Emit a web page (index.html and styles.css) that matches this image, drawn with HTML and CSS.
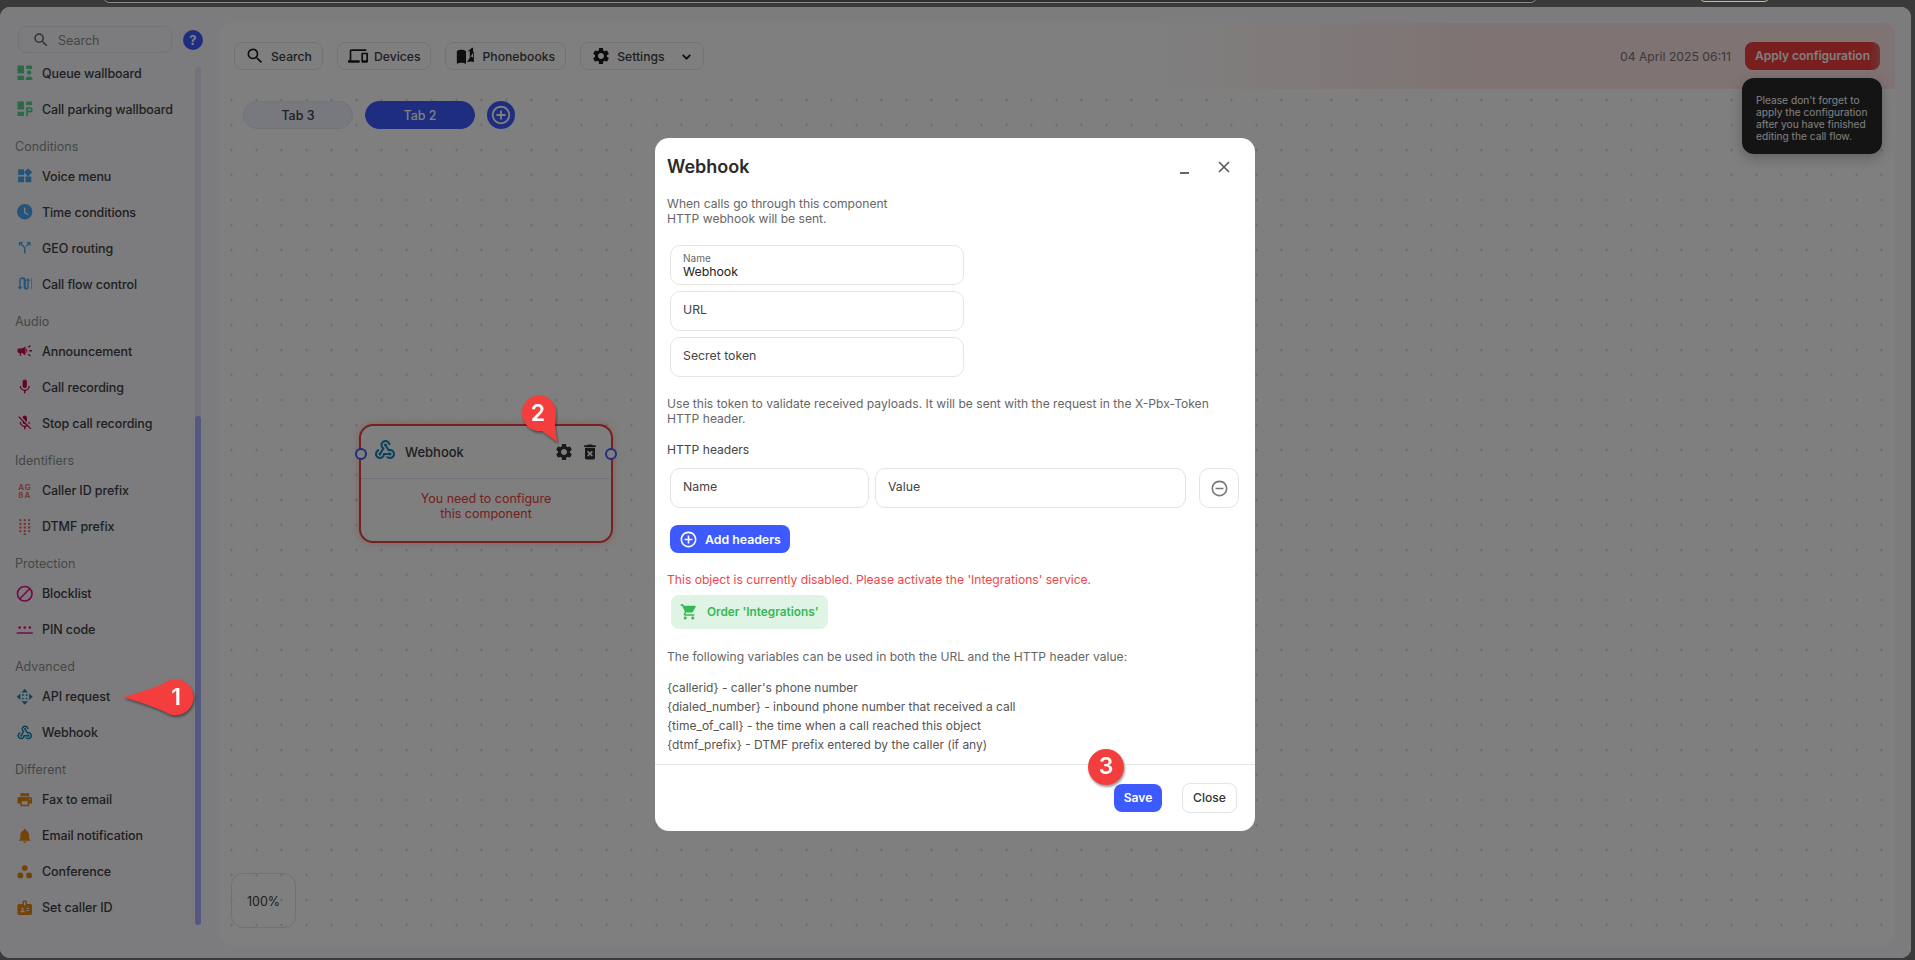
FILE: index.html
```html
<!DOCTYPE html>
<html lang="en">
<head>
  <meta charset="UTF-8">
  <title>Call flow editor</title>
  <link rel="stylesheet" href="styles.css">
</head>
<body>

  <svg class="sprite" width="0" height="0">
    <symbol id="i-search" viewBox="0 0 24 24"><path d="M15.5 14h-.79l-.28-.27A6.471 6.471 0 0 0 16 9.5 6.5 6.5 0 1 0 9.5 16c1.61 0 3.09-.59 4.23-1.57l.27.28v.79l5 4.99L20.49 19l-4.99-5zm-6 0C7.01 14 5 11.99 5 9.5S7.01 5 9.5 5 14 7.01 14 9.5 11.99 14 9.5 14z"/></symbol>
    <symbol id="i-queue" viewBox="0 0 24 24"><path d="M2 2h9v11H2zM2 16h9v6H2zM14 2h8v5h-8z"/><circle cx="18" cy="11.500" r="3"/><path d="M13 22c0-3.500 2-5 5-5s5 1.500 5 5z"/></symbol>
    <symbol id="i-parking" viewBox="0 0 24 24"><path d="M2 2h9v11H2zM2 16h9v6H2zM14 2h8v5h-8zM14 10h5.500a3.500 3.500 0 0 1 0 7H16.500v5H14zm2.500 2.500v2h3a1 1 0 0 0 0-2z"/></symbol>
    <symbol id="i-widgets" viewBox="0 0 24 24"><path d="M13 13v8h8v-8h-8zM3 21h8v-8H3v8zM3 3v8h8V3H3zm13.660-1.310L11 7.340 16.660 13l5.660-5.660-5.660-5.650z"/></symbol>
    <symbol id="i-clock" viewBox="0 0 24 24"><path d="M12 1.500a10.500 10.500 0 1 0 0 21 10.500 10.500 0 0 0 0-21zm4 15.200-5-3V6h1.800v6.800l4.100 2.400z"/></symbol>
    <symbol id="i-split" viewBox="0 0 24 24"><path d="M14 4l2.290 2.290-2.880 2.880 1.420 1.420 2.880-2.880L20 10V4zm-4 0H4v6l2.290-2.290 4.710 4.700V20h2v-8.410l-5.290-5.300z"/></symbol>
    <symbol id="i-flow" viewBox="0 0 24 24"><path d="M2 16l3.500 4L9 16H6.500V7.500a2 2 0 0 1 4 0v9a3.500 3.500 0 0 0 7 0V8H20l-3.500-4L13 8h2.500v8.500a1 1 0 0 1-2 0v-9a4.500 4.500 0 0 0-9 0V16z"/><path d="M20.500 4h1.500v16h-1.500z" opacity=".6"/></symbol>
    <symbol id="i-campaign" viewBox="0 0 24 24"><path d="M18 11v2h4v-2h-4zm-2 6.610c.960.710 2.210 1.650 3.200 2.390.400-.530.800-1.070 1.200-1.600-.990-.740-2.240-1.680-3.200-2.400-.400.540-.800 1.080-1.200 1.610zM20.400 5.600c-.400-.530-.800-1.070-1.200-1.600-.990.740-2.240 1.680-3.200 2.400.400.530.800 1.070 1.200 1.600.960-.720 2.210-1.650 3.200-2.400zM4 9c-1.100 0-2 .900-2 2v2c0 1.100.900 2 2 2h1v4h2v-4h1l5 3V6L8 9H4zm11.500 3c0-1.330-.580-2.530-1.500-3.350v6.690c.920-.810 1.500-2.010 1.500-3.340z"/></symbol>
    <symbol id="i-mic" viewBox="0 0 24 24"><path d="M12 14c1.660 0 2.990-1.340 2.990-3L15 5c0-1.660-1.340-3-3-3S9 3.340 9 5v6c0 1.660 1.340 3 3 3zm5.300-3c0 3-2.540 5.100-5.300 5.100S6.700 14 6.700 11H5c0 3.410 2.720 6.230 6 6.720V21h2v-3.280c3.280-.480 6-3.300 6-6.720h-1.700z"/></symbol>
    <symbol id="i-micoff" viewBox="0 0 24 24"><path d="M19 11h-1.700c0 .740-.160 1.430-.430 2.050l1.230 1.230c.560-.980.900-2.090.900-3.280zm-4.020.170c0-.060.020-.110.020-.170V5c0-1.660-1.340-3-3-3S9 3.340 9 5v.180l5.980 5.990zM4.270 3L3 4.270l6.010 6.010V11c0 1.660 1.330 3 2.990 3 .220 0 .440-.030.650-.080l1.660 1.660c-.710.330-1.500.520-2.310.520-2.760 0-5.300-2.100-5.300-5.100H5c0 3.410 2.720 6.230 6 6.720V21h2v-3.280c.910-.130 1.770-.450 2.540-.900L19.730 21 21 19.730 4.270 3z"/></symbol>
    <symbol id="i-dialpad" viewBox="0 0 24 24"><circle cx="6" cy="3" r="1.600"/><circle cx="12" cy="3" r="1.600"/><circle cx="18" cy="3" r="1.600"/><circle cx="6" cy="8" r="1.600"/><circle cx="12" cy="8" r="1.600"/><circle cx="18" cy="8" r="1.600"/><circle cx="6" cy="13" r="1.600"/><circle cx="12" cy="13" r="1.600"/><circle cx="18" cy="13" r="1.600"/><circle cx="12" cy="18" r="1.600"/><circle cx="6" cy="18" r="1.600"/><circle cx="18" cy="18" r="1.600"/><circle cx="12" cy="22.500" r="1.600"/></symbol>
    <symbol id="i-block" viewBox="0 0 24 24"><circle cx="12" cy="12" r="10" fill="none" stroke="currentColor" stroke-width="2.200"/><path d="M5.500 18.500l13-13" stroke="currentColor" stroke-width="2.200"/></symbol>
    <symbol id="i-pin" viewBox="0 0 24 24"><circle cx="5" cy="9" r="1.800"/><circle cx="12" cy="9" r="1.800"/><circle cx="19" cy="9" r="1.800"/><path d="M1 15.500h22v2H1z"/></symbol>
    <symbol id="i-api" viewBox="0 0 24 24"><path d="M12 1l4.500 5h-9zM12 23l-4.500-5h9zM1 12l5-4.500v9zM23 12l-5 4.500v-9z"/><circle cx="9.500" cy="9.500" r="1.300"/><circle cx="14.500" cy="9.500" r="1.300"/><circle cx="9.500" cy="14.500" r="1.300"/><circle cx="14.500" cy="14.500" r="1.300"/></symbol>
    <symbol id="i-webhook" viewBox="0 0 24 24"><path d="M10 15h5.880c.270-.310.670-.500 1.120-.500.830 0 1.500.670 1.500 1.500s-.670 1.500-1.500 1.500c-.440 0-.840-.190-1.120-.500H11.900c-.460 2.280-2.480 4-4.900 4-2.760 0-5-2.240-5-5 0-2.420 1.720-4.440 4-4.900v2.070c-1.160.410-2 1.530-2 2.830 0 1.650 1.350 3 3 3s3-1.350 3-3v-1zm2.500-11c1.650 0 3 1.350 3 3h2c0-2.760-2.240-5-5-5s-5 2.240-5 5c0 1.430.600 2.710 1.550 3.620l-2.350 3.900c-.680.140-1.200.750-1.200 1.480 0 .830.670 1.500 1.500 1.500s1.500-.670 1.500-1.500c0-.160-.020-.310-.070-.450l3.380-5.630C10.490 9.610 9.500 8.420 9.500 7c0-1.650 1.350-3 3-3zm4.500 9c-.640 0-1.230.200-1.720.540l-3.050-5.070C11.530 8.350 11 7.740 11 7c0-.830.670-1.500 1.500-1.500S14 6.170 14 7c0 .150-.020.290-.060.430l2.190 3.650c.280-.050.570-.080.870-.080 2.760 0 5 2.240 5 5s-2.240 5-5 5c-1.850 0-3.470-1.010-4.330-2.500h2.670c.480.320 1.050.500 1.660.500 1.650 0 3-1.350 3-3s-1.350-3-3-3z"/></symbol>
    <symbol id="i-print" viewBox="0 0 24 24"><path d="M19 8H5c-1.660 0-3 1.340-3 3v6h4v4h12v-4h4v-6c0-1.660-1.340-3-3-3zm-3 11H8v-5h8v5zm3-7c-.550 0-1-.450-1-1s.450-1 1-1 1 .450 1 1-.450 1-1 1zm-1-9H6v4h12V3z"/></symbol>
    <symbol id="i-bell" viewBox="0 0 24 24"><path d="M12 22c1.100 0 2-.900 2-2h-4c0 1.100.890 2 2 2zm6-6v-5c0-3.070-1.640-5.640-4.500-6.320V4c0-.830-.670-1.500-1.500-1.500s-1.500.670-1.500 1.500v.680C7.630 5.360 6 7.920 6 11v5l-2 2v1h16v-1l-2-2z"/></symbol>
    <symbol id="i-conf" viewBox="0 0 24 24"><circle cx="12" cy="7" r="4"/><circle cx="6" cy="17" r="4"/><circle cx="18" cy="17" r="4"/></symbol>
    <symbol id="i-badge" viewBox="0 0 24 24"><path d="M20 7h-5V4c0-1.100-.900-2-2-2h-2c-1.100 0-2 .900-2 2v3H4c-1.100 0-2 .900-2 2v11c0 1.100.900 2 2 2h16c1.100 0 2-.900 2-2V9c0-1.100-.900-2-2-2zM9 12c.830 0 1.500.670 1.500 1.500S9.830 15 9 15s-1.500-.670-1.500-1.500S8.170 12 9 12zm3 6H6v-.750c0-1 2-1.500 3-1.500s3 .500 3 1.500V18zm1-9h-2V4h2v5zm5 7.500h-4V15h4v1.500zm0-3h-4V12h4v1.500z"/></symbol>
    <symbol id="i-devices" viewBox="0 0 24 24"><path d="M4 6h18V4H4c-1.100 0-2 .900-2 2v11H0v3h14v-3H4V6zm19 2h-6c-.550 0-1 .450-1 1v10c0 .550.450 1 1 1h6c.550 0 1-.450 1-1V9c0-.550-.450-1-1-1zm-1 9h-4v-7h4v7z"/></symbol>
    <symbol id="i-book" viewBox="0 0 24 24"><path d="M1 6c1.450-1.100 3.550-1.500 5.500-1.500S10.550 4.900 12 6v15.500c-1.450-1.100-3.550-1.500-5.500-1.500-1.450 0-3.400.450-4.750 1.100-.100 0-.150.050-.250.050-.250 0-.500-.250-.500-.500zM13 7c1-.700 2.200-1.200 3.500-1.400V14l2-1.500 2 1.500V2h-1.500v.500M21.500 6.500v12.700c-1.100-.350-2.800-.700-4-.700-1.400 0-3.200.400-4.500 1z"/></symbol>
    <symbol id="i-gear" viewBox="0 0 24 24"><path d="M19.140 12.940c.040-.300.060-.610.060-.940 0-.320-.020-.640-.070-.940l2.030-1.580c.180-.140.230-.410.120-.610l-1.920-3.320c-.120-.220-.370-.290-.590-.220l-2.390.960c-.500-.380-1.030-.700-1.620-.940l-.360-2.540c-.040-.240-.240-.410-.480-.410h-3.840c-.240 0-.430.170-.470.410l-.360 2.540c-.590.240-1.130.570-1.620.940l-2.390-.960c-.220-.080-.470 0-.590.220L2.740 8.870c-.120.210-.080.470.120.610l2.030 1.580c-.050.300-.090.630-.090.940s.020.640.070.940l-2.030 1.580c-.180.140-.230.410-.120.610l1.920 3.320c.120.220.370.290.590.220l2.390-.960c.500.380 1.030.700 1.620.940l.360 2.540c.050.240.240.410.480.410h3.840c.240 0 .440-.170.470-.410l.360-2.540c.590-.240 1.130-.560 1.620-.940l2.390.960c.220.080.470 0 .590-.220l1.920-3.320c.120-.220.070-.470-.120-.610l-2.010-1.580zM12 15.600c-1.980 0-3.600-1.620-3.600-3.600s1.620-3.600 3.600-3.600 3.600 1.620 3.600 3.600-1.620 3.600-3.600 3.600z"/></symbol>
    <symbol id="i-trash" viewBox="0 0 24 24"><path d="M6 19c0 1.100.900 2 2 2h8c1.100 0 2-.900 2-2V7H6v12zm2.460-7.120l1.410-1.410L12 12.590l2.120-2.120 1.410 1.410L13.410 14l2.120 2.120-1.410 1.410L12 15.410l-2.120 2.120-1.410-1.410L10.590 14l-2.130-2.120zM15.500 4l-1-1h-5l-1 1H5v2h14V4z"/></symbol>
    <symbol id="i-plus" viewBox="0 0 24 24"><path d="M13 7h-2v4H7v2h4v4h2v-4h4v-2h-4V7zm-1-5C6.480 2 2 6.480 2 12s4.480 10 10 10 10-4.480 10-10S17.520 2 12 2zm0 18c-4.410 0-8-3.590-8-8s3.590-8 8-8 8 3.590 8 8-3.590 8-8 8z"/></symbol>
    <symbol id="i-minus" viewBox="0 0 24 24"><path d="M7 11v2h10v-2H7zm5-9C6.480 2 2 6.480 2 12s4.480 10 10 10 10-4.480 10-10S17.520 2 12 2zm0 18c-4.410 0-8-3.590-8-8s3.590-8 8-8 8 3.590 8 8-3.590 8-8 8z"/></symbol>
    <symbol id="i-cart" viewBox="0 0 24 24"><path d="M7 18c-1.100 0-1.990.900-1.990 2S5.900 22 7 22s2-.900 2-2-.900-2-2-2zM1 2v2h2l3.600 7.590-1.350 2.450c-.160.280-.250.610-.250.960 0 1.100.900 2 2 2h12v-2H7.420c-.140 0-.250-.110-.250-.250l.030-.120.900-1.830h7.450c.750 0 1.410-.410 1.750-1.030l3.580-6.490c.080-.140.120-.310.120-.480 0-.550-.450-1-1-1H5.210l-.940-2H1zm16 16c-1.100 0-1.990.900-1.990 2s.890 2 1.990 2 2-.900 2-2-.900-2-2-2z"/></symbol>
  </svg>

  <div class="browser-bar">
    <div class="browser-url"></div>
    <div class="browser-btn"></div>
  </div>

  <div class="window">

    <aside class="sidebar">
      <div class="side-search">
        <div class="search-box">
          <svg class="search-icon"><use href="#i-search"/></svg>
          <span>Search</span>
        </div>
        <div class="help">?</div>
      </div>
      <div class="side-body">
        <div class="side-list">
          <div class="item"><svg class="c-green"><use href="#i-queue"/></svg>Queue wallboard</div>
          <div class="item"><svg class="c-green"><use href="#i-parking"/></svg>Call parking wallboard</div>

          <div class="group">Conditions</div>
          <div class="item"><svg class="c-blue"><use href="#i-widgets"/></svg>Voice menu</div>
          <div class="item"><svg class="c-blue"><use href="#i-clock"/></svg>Time conditions</div>
          <div class="item"><svg class="c-blue"><use href="#i-split"/></svg>GEO routing</div>
          <div class="item"><svg class="c-blue"><use href="#i-flow"/></svg>Call flow control</div>

          <div class="group">Audio</div>
          <div class="item"><svg class="c-wine"><use href="#i-campaign"/></svg>Announcement</div>
          <div class="item"><svg class="c-wine"><use href="#i-mic"/></svg>Call recording</div>
          <div class="item"><svg class="c-wine"><use href="#i-micoff"/></svg>Stop call recording</div>

          <div class="group">Identifiers</div>
          <div class="item"><svg class="c-brick" viewBox="0 0 24 24"><text class="mini" x="3" y="11">AG</text><text class="mini" x="3" y="22">8A</text></svg>Caller ID prefix</div>
          <div class="item"><svg class="c-brick"><use href="#i-dialpad"/></svg>DTMF prefix</div>

          <div class="group">Protection</div>
          <div class="item"><svg class="c-pink"><use href="#i-block"/></svg>Blocklist</div>
          <div class="item"><svg class="c-pink"><use href="#i-pin"/></svg>PIN code</div>

          <div class="group">Advanced</div>
          <div class="item"><svg class="c-teal"><use href="#i-api"/></svg>API request</div>
          <div class="item"><svg class="c-teal"><use href="#i-webhook"/></svg>Webhook</div>

          <div class="group">Different</div>
          <div class="item"><svg class="c-amber"><use href="#i-print"/></svg>Fax to email</div>
          <div class="item"><svg class="c-amber"><use href="#i-bell"/></svg>Email notification</div>
          <div class="item"><svg class="c-amber"><use href="#i-conf"/></svg>Conference</div>
          <div class="item"><svg class="c-amber"><use href="#i-badge"/></svg>Set caller ID</div>
        </div>
        <div class="scrollbar"><div class="thumb"></div></div>
      </div>
    </aside>

    <main class="panel">
      <header class="topbar">
        <div class="tool"><svg><use href="#i-search"/></svg>Search</div>
        <div class="tool"><svg><use href="#i-devices"/></svg>Devices</div>
        <div class="tool"><svg><use href="#i-book"/></svg>Phonebooks</div>
        <div class="tool"><svg><use href="#i-gear"/></svg>Settings
          <svg class="chevron" viewBox="0 0 12 12"><path d="M2.500 4.500L6 8l3.500-3.500"/></svg>
        </div>
        <div class="topbar-right">
          <span class="date">04 April 2025 06:11</span>
          <div class="apply">Apply configuration</div>
        </div>
      </header>

      <div class="canvas">
        <div class="tabs">
          <div class="tab">Tab 3</div>
          <div class="tab tab-active">Tab 2</div>
          <div class="tab-add"><svg><use href="#i-plus"/></svg></div>
        </div>

        <div class="node">
          <div class="node-head">
            <svg class="node-icon"><use href="#i-webhook"/></svg>
            <span class="node-title">Webhook</span>
            <svg class="node-btn"><use href="#i-gear"/></svg>
            <svg class="node-btn"><use href="#i-trash"/></svg>
          </div>
          <div class="node-msg">You need to configure<br>this component</div>
          <span class="port port-left"></span>
          <span class="port port-right"></span>
        </div>

        <div class="zoom-box">100%</div>
      </div>

      <div class="tooltip">Please don't forget to<br>apply the configuration<br>after you have finished<br>editing the call flow.</div>
    </main>

    <div class="overlay"></div>
  </div>

  <section class="modal">
    <div class="modal-head">
      <h2>Webhook</h2>
      <span class="minimize"></span>
      <svg class="close-x" viewBox="0 0 14 14"><path d="M2 2l10 10M12 2L2 12"/></svg>
    </div>

    <div class="modal-body">
      <p class="note">When calls go through this component<br>HTTP webhook will be sent.</p>

      <div class="fields">
        <div class="field filled"><label>Name</label><span>Webhook</span></div>
        <div class="field">URL</div>
        <div class="field">Secret token</div>
      </div>

      <p class="note hint">Use this token to validate received payloads. It will be sent with the request in the X-Pbx-Token HTTP header.</p>

      <div class="sub-label">HTTP headers</div>
      <div class="header-row">
        <div class="field field-name">Name</div>
        <div class="field field-value">Value</div>
        <div class="field field-remove"><svg><use href="#i-minus"/></svg></div>
      </div>

      <div class="btn-add"><svg><use href="#i-plus"/></svg>Add headers</div>

      <p class="error">This object is currently disabled. Please activate the 'Integrations' service.</p>
      <div class="btn-order"><svg><use href="#i-cart"/></svg>Order 'Integrations'</div>

      <p class="note vars-intro">The following variables can be used in both the URL and the HTTP header value:</p>
      <ul class="vars">
        <li>{callerid} - caller's phone number</li>
        <li>{dialed_number} - inbound phone number that received a call</li>
        <li>{time_of_call} - the time when a call reached this object</li>
        <li>{dtmf_prefix} - DTMF prefix entered by the caller (if any)</li>
      </ul>
    </div>

    <div class="modal-foot">
      <div class="btn-save">Save</div>
      <div class="btn-close">Close</div>
    </div>
  </section>

  <!-- red step markers -->
  <svg class="mark mark-1" viewBox="0 0 80 46">
    <path d="M3 22C20 17 38 12 46 7a18 18 0 1 1 3 32C38 33 20 27 3 22z"/>
    <text x="56" y="30">1</text>
  </svg>
  <svg class="mark mark-2" viewBox="0 0 46 56">
    <path d="M23 3a18 18 0 0 1 18 18c0 5-1 9-1 12l2 17-15-11a18 18 0 1 1-4-36z"/>
    <text x="23" y="28.500">2</text>
  </svg>
  <svg class="mark mark-3" viewBox="0 0 46 46">
    <circle cx="23" cy="23" r="18"/>
    <text x="23" y="30">3</text>
  </svg>

</body>
</html>
```

FILE: styles.css
```css
* {
  box-sizing: border-box;
}

body {
  margin: 0;
  height: 960px;
  overflow: hidden;
  position: relative;
  background-color: #3a3a3a;
  font-family: 'Inter', 'Liberation Sans', sans-serif;
  font-size: 12.500px;
  color: #3c3c3c;
}

.sprite {
  position: absolute;
}

svg {
  fill: currentColor;
  flex-shrink: 0;
}

/* strip of the browser above the app */
.browser-bar {
  height: 7px;
  position: relative;
}

.browser-url {
  position: absolute;
  left: 103px;
  top: -10px;
  width: 1434px;
  height: 13px;
  border: 1px solid #8c8c8c;
  border-radius: 8px;
  background-color: #2f2f2f;
}

.browser-btn {
  position: absolute;
  left: 1699px;
  top: -10px;
  width: 71px;
  height: 12px;
  border: 1px solid #a9c9a0;
  border-radius: 6px;
}

.window {
  position: relative;
  display: flex;
  height: 951px;
  margin-right: 4px;
  border-radius: 10px;
  background-color: #f8f9ff;
  overflow: hidden;
}

/* sidebar */
.sidebar {
  width: 220px;
  flex-shrink: 0;
}

.side-search {
  display: flex;
  align-items: center;
  padding: 19px 0 2px 18px;
}

.search-box {
  display: flex;
  align-items: center;
  gap: 8px;
  width: 154px;
  height: 27px;
  padding: 1px 0 0 13px;
  border: 1px solid #e6e6ec;
  border-radius: 8px;
  color: #8a8a8a;
  font-size: 12.500px;
}

.search-icon {
  width: 18px;
  height: 18px;
  margin-top: -1px;
  color: #666;
}

.help {
  width: 20px;
  height: 20px;
  margin-left: 11px;
  border-radius: 50%;
  background-color: #3d5afe;
  color: #fff;
  font-size: 13px;
  font-weight: 700;
  line-height: 20px;
  text-align: center;
}

.side-body {
  display: flex;
}

.side-list {
  width: 195px;
  padding-left: 15px;
}

.item {
  display: flex;
  align-items: center;
  height: 36px;
  gap: 8.250px;
  padding-left: 1.250px;
  font-size: 12.500px;
  font-weight: 500;
  letter-spacing: -0.1px;
  color: #404040;
}

.item svg {
  width: 17.500px;
  height: 17.500px;
}

.group {
  padding: 13px 0 4.100px;
  line-height: 14px;
  font-size: 12.500px;
  color: #8d8d8d;
}

.c-green { color: #55d58f; }
.c-blue { color: #4aa8f5; }
.c-wine { color: #c00c52; }
.c-brick { color: #e86a55; }
.c-pink { color: #e9128a; }
.c-teal { color: #0f87b8; }
.c-amber { color: #e8860f; }

.mini {
  font-size: 11px;
  font-weight: 600;
  letter-spacing: 1.500px;
}

.scrollbar {
  display: flex;
  flex-direction: column;
  justify-content: flex-end;
  width: 6px;
  height: 858px;
  margin-top: 12px;
  border-radius: 3px;
  background-color: #e6e8f6;
}

.thumb {
  height: 509px;
  border-radius: 3px;
  background-color: #a6b0ff;
}

/* main panel */
.panel {
  position: relative;
  display: flex;
  flex-direction: column;
  width: 1675px;
  height: 922px;
  margin-top: 16px;
  border-radius: 12px;
  background-color: #fff;
}

.topbar {
  display: flex;
  align-items: center;
  gap: 14px;
  height: 66px;
  flex-shrink: 0;
  padding: 0 15px 0 14px;
  border-radius: 12px 12px 0 0;
  background: linear-gradient(90deg, #fff 55%, #ffe6e6 76%);
  font-size: 12.200px;
}

.tool {
  display: flex;
  align-items: center;
  gap: 6px;
  height: 28px;
  padding: 0 10px;
  border: 1px solid #e6e6e6;
  border-radius: 8px;
  font-weight: 500;
  color: #404040;
}

.tool svg {
  width: 20px;
  height: 20px;
  color: #1c1c1c;
}

.tool .chevron {
  width: 13px;
  height: 13px;
  margin-left: 9px;
  fill: none;
  stroke: #1c1c1c;
  stroke-width: 1.600;
}

.topbar-right {
  display: flex;
  align-items: center;
  gap: 14px;
  margin-left: auto;
}

.date {
  color: #747474;
}

.apply {
  width: 135px;
  height: 28px;
  line-height: 28px;
  text-align: center;
  border-radius: 8px;
  background: linear-gradient(90deg, #f03e3e 92%, #e06a6a);
  color: #fff;
  font-size: 12px;
  font-weight: 600;
}

.tooltip {
  position: absolute;
  left: 1522px;
  top: 55px;
  width: 140px;
  height: 76px;
  padding: 16px 0 0 14px;
  border-radius: 12px;
  background-color: #282828;
  box-shadow: 0 4px 14px rgba(0, 0, 0, 0.25);
  color: #fff;
  font-size: 10.200px;
  line-height: 12px;
}

.canvas {
  position: relative;
  flex: 1;
  border-radius: 0 0 12px 12px;
  background-image: radial-gradient(circle, #d8d8d8 1px, transparent 1.300px);
  background-size: 25px 25px;
  background-position: -1px -1.500px;
}

.tabs {
  display: flex;
  align-items: center;
  gap: 12px;
  padding: 12px 0 0 23px;
}

.tab {
  width: 110px;
  height: 28px;
  line-height: 27px;
  text-align: center;
  border: 1px solid #e3e6f2;
  border-radius: 14px;
  background-color: #f1f3fc;
  font-weight: 500;
  color: #404040;
}

.tab-active {
  border-color: #3d5afe;
  background-color: #3d5afe;
  color: #fff;
}

.tab-add {
  display: flex;
  align-items: center;
  justify-content: center;
  width: 28px;
  height: 28px;
  border-radius: 50%;
  background-color: #3d5afe;
  color: #fff;
}

.tab-add svg {
  width: 22px;
  height: 22px;
}

/* component on the free canvas */
.node {
  position: absolute;
  left: 139px;
  top: 335px;
  width: 254px;
  height: 119px;
  border: 2px solid #f04040;
  border-radius: 14px;
  background-color: #fff;
  box-shadow: 0 0 10px rgba(240, 64, 64, 0.3);
}

.node-head {
  display: flex;
  align-items: center;
  gap: 6px;
  height: 53px;
  padding: 0 11px 0 12px;
  border-bottom: 1px solid #e3e6f5;
}

.node-icon {
  width: 24px;
  height: 24px;
  margin-right: 2px;
  margin-top: -4px;
  color: #0f87b8;
}

.node-title {
  flex: 1;
  font-size: 13px;
  font-weight: 500;
  color: #3c3c3c;
}

.node-btn {
  width: 20px;
  height: 20px;
  color: #333;
}

.node-msg {
  padding-top: 12px;
  text-align: center;
  line-height: 15px;
  font-size: 12.500px;
  color: #f04040;
}

.port {
  position: absolute;
  top: 22px;
  width: 12px;
  height: 12px;
  border: 2px solid #3d5afe;
  border-radius: 50%;
  background-color: #fff;
}

.port-left {
  left: -6px;
}

.port-right {
  right: -6px;
}

.zoom-box {
  position: absolute;
  left: 11px;
  bottom: 17px;
  width: 65px;
  height: 55px;
  line-height: 55px;
  text-align: center;
  border: 1px solid #e3e3e3;
  border-radius: 12px;
  color: #404040;
}

.overlay {
  position: absolute;
  inset: 0;
  background-color: rgba(0, 0, 0, 0.5);
}

/* modal */
.modal {
  position: absolute;
  left: 655px;
  top: 138px;
  width: 600px;
  height: 693px;
  display: flex;
  flex-direction: column;
  border-radius: 14px;
  background-color: #fff;
}

.modal-head {
  display: flex;
  align-items: center;
  height: 57.500px;
  padding: 0 24px 0 12px;
  flex-shrink: 0;
}

.modal-head h2 {
  flex: 1;
  margin: 0;
  font-size: 18px;
  font-weight: 600;
  color: #2a2a2a;
}

.minimize {
  width: 9px;
  height: 2px;
  margin: 12px 28px 0 0;
  background-color: #666;
}

.close-x {
  width: 14px;
  height: 14px;
  fill: none;
  stroke: #555;
  stroke-width: 1.500;
}

.modal-body {
  flex: 1;
  padding: 0 12px;
}

.note {
  margin: 0;
  line-height: 15px;
  font-size: 12.100px;
  color: #666;
}

.fields {
  display: flex;
  flex-direction: column;
  gap: 6px;
  width: 294px;
  margin: 19.500px 0 0 3px;
}

.field {
  display: flex;
  align-items: center;
  height: 40px;
  padding: 0 12px 4px;
  border: 1px solid #e4e4e4;
  border-radius: 10px;
  font-size: 12.300px;
  color: #444;
}

.filled {
  flex-direction: column;
  align-items: flex-start;
  justify-content: center;
  padding: 2px 12px 0;
  color: #222;
}

.filled label {
  font-size: 10px;
  line-height: 12px;
  color: #666;
}

.filled span {
  line-height: 16px;
}

.hint {
  margin-top: 18.500px;
}

.sub-label {
  margin-top: 16px;
  line-height: 15px;
  font-size: 12.100px;
  color: #444;
}

.header-row {
  display: flex;
  margin: 11.500px 0 0 3px;
}

.field-name {
  width: 199px;
  margin-right: 6px;
}

.field-value {
  width: 311px;
  margin-right: 13px;
}

.field-remove {
  justify-content: center;
  width: 40px;
  padding: 0;
  color: #777;
}

.field-remove svg {
  width: 19px;
  height: 19px;
}

.btn-add {
  display: flex;
  align-items: center;
  gap: 7px;
  width: 120px;
  height: 28px;
  margin: 17px 0 0 3px;
  padding-left: 9px;
  border-radius: 8px;
  background-color: #3d5afe;
  color: #fff;
  font-size: 12.300px;
  font-weight: 600;
}

.btn-add svg {
  width: 19px;
  height: 19px;
}

.error {
  margin: 18.500px 0 0;
  line-height: 15px;
  font-size: 12.100px;
  color: #f44349;
}

.btn-order {
  display: flex;
  align-items: center;
  gap: 9px;
  width: 157px;
  height: 34px;
  margin: 8.500px 0 0 4px;
  padding-left: 9px;
  border-radius: 8px;
  background-color: #e0f4e6;
  color: #36b955;
  font-size: 11.800px;
  font-weight: 600;
}

.btn-order svg {
  width: 18px;
  height: 18px;
}

.vars-intro {
  margin-top: 19.500px;
}

.vars {
  margin: 14px 0 0;
  padding: 0;
  list-style: none;
  line-height: 19px;
  font-size: 12px;
  color: #555;
}

.modal-foot {
  display: flex;
  align-items: center;
  justify-content: flex-end;
  gap: 20px;
  height: 67px;
  padding-right: 18px;
  border-top: 1px solid #e4e4e4;
  font-size: 12.100px;
  font-weight: 600;
}

.btn-save {
  width: 48px;
  height: 28px;
  line-height: 28px;
  text-align: center;
  border-radius: 8px;
  background-color: #3d5afe;
  color: #fff;
}

.btn-close {
  width: 55px;
  height: 30px;
  line-height: 28px;
  text-align: center;
  border: 1px solid #e4e4e4;
  border-radius: 8px;
  font-weight: 500;
  color: #333;
}

/* step markers over everything */
.mark {
  position: absolute;
  filter: drop-shadow(1px 2px 1px rgba(0, 0, 0, 0.4));
  color: #f43e3e;
}

.mark text {
  fill: #fff;
  font-size: 23px;
  font-weight: 600;
  text-anchor: middle;
}

.mark-1 {
  left: 120px;
  top: 675px;
  width: 80px;
  height: 46px;
}

.mark-2 {
  left: 515px;
  top: 392px;
  width: 46px;
  height: 56px;
}

.mark-3 {
  left: 1083px;
  top: 744px;
  width: 46px;
  height: 46px;
}
```
